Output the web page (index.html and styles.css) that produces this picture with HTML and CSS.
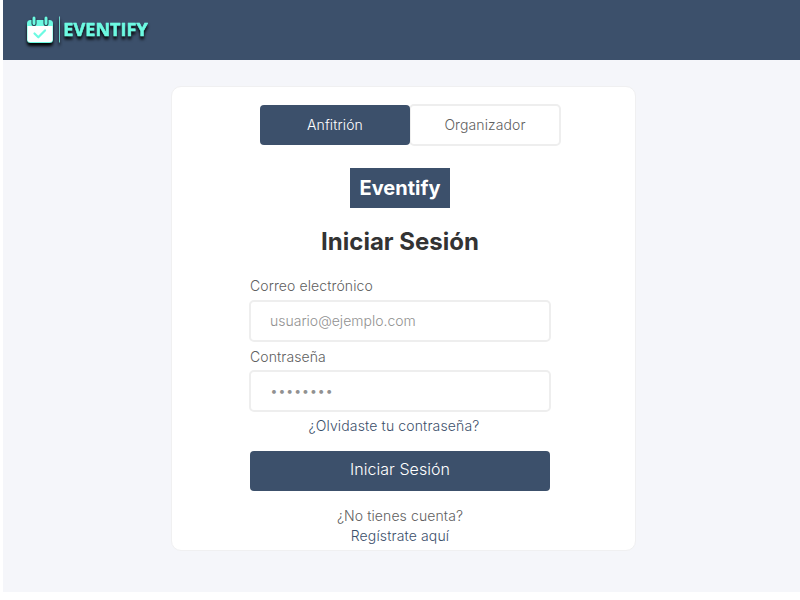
FILE: index.html
```html
<!DOCTYPE html>
<html lang="es">
<head>
<meta charset="utf-8">
<title>Eventify - Iniciar Sesión</title>
<link rel="stylesheet" href="styles.css">
</head>
<body>
<div class="page">
  <header class="topbar">
    <svg class="logo" width="134" height="44" viewBox="0 0 134 44" role="img" aria-label="Eventify">
      <rect x="7" y="12" width="26" height="23" rx="3.5" fill="#6dfae2"/>
      <path d="M7.500 18h25v13.500a2.500 2.500 0 0 1-2.500 2.500h-20a2.500 2.500 0 0 1-2.500-2.500z" fill="#fff"/>
      <g stroke-linecap="round">
        <path d="M14 11.500v4M26 11.500v4" stroke="#26394d" stroke-width="5"/>
        <path d="M14 10v5.500M26 10v5.500" stroke="#6dfae2" stroke-width="3"/>
      </g>
      <path d="M14.500 25.500l3.800 3.800 6.700-6.900" fill="none" stroke="#6dfae2" stroke-width="2.200" stroke-linecap="round" stroke-linejoin="round"/>
      <rect x="39" y="8.500" width="1" height="26" fill="#6dd6cc"/>
      <text class="logo-name" x="43.300" y="28.300" textLength="84.500">EVENTIFY</text>
    </svg>
  </header>
  <main class="card">
    <div class="tabs">
      <button class="tab tab-active">Anfitrión</button>
      <button class="tab">Organizador</button>
    </div>
    <div class="brand">Eventify</div>
    <h1 class="title">Iniciar Sesión</h1>
    <form class="form">
      <label class="label" for="email">Correo electrónico</label>
      <input class="input" id="email" type="text" placeholder="usuario@ejemplo.com">
      <label class="label label-password" for="password">Contraseña</label>
      <input class="input" id="password" type="password" placeholder="••••••••">
      <a class="link forgot">¿Olvidaste tu contraseña?</a>
      <button class="submit" type="button">Iniciar Sesión</button>
      <span class="signup">¿No tienes cuenta?</span>
      <a class="link">Regístrate aquí</a>
    </form>
  </main>
</div>
</body>
</html>
```
FILE: styles.css
```css
* { box-sizing: border-box; }
body {
  margin: 0;
  background: #fff;
  font-family: Inter, sans-serif;
  font-size: 14px;
  font-weight: 350;
  letter-spacing: .1px;
  color: #606060;
}
button, input { font: inherit; letter-spacing: inherit; margin: 0; }
.page {
  margin-left: 3px;
  height: 592px;
  background: #f5f6fa;
}
.topbar {
  display: flex;
  height: 60px;
  padding: 8px 0 0 17px;
  background: #3c506b;
}
.logo { filter: drop-shadow(.5px 3px 1.5px rgba(0, 0, 0, .95)); }
.logo-name {
  font-family: "Open Sans", sans-serif;
  font-size: 18px;
  font-weight: 700;
  letter-spacing: 0;
  fill: #6dfae2;
  stroke: #6dfae2;
  stroke-width: .6px;
  stroke-linejoin: round;
}
.card {
  display: flex;
  flex-direction: column;
  align-items: center;
  width: 465px;
  height: 465px;
  margin: 26px 0 0 168px;
  padding: 17px 7px 0 0;
  background: #fff;
  border: 1px solid #f0f0f1;
  border-radius: 10px;
}
.tabs {
  display: flex;
  width: 302px;
  height: 42px;
  margin-left: 20px;
}
.tab {
  width: 152px;
  height: 42px;
  margin-left: -1px;
  padding: 0 0 1px;
  background: #fff;
  color: #606060;
  border: 2px solid #eee;
  border-radius: 5px;
}
.tab-active {
  position: relative;
  width: 150px;
  height: 40px;
  margin: 1px 0 1px 1px;
  background: #3c506b;
  color: #fff;
  border: 0;
  border-radius: 4px;
}
.brand {
  width: 100px;
  height: 40px;
  margin-top: 22px;
  background: #3c506b;
  color: #fff;
  font-size: 20px;
  font-weight: 700;
  letter-spacing: 0;
  line-height: 40px;
  text-align: center;
}
.title {
  margin: 19px 0 0;
  color: #333;
  font-size: 24px;
  font-weight: 700;
  letter-spacing: 0;
  line-height: 30px;
}
.form {
  display: flex;
  flex-direction: column;
  align-items: center;
  width: 302px;
  margin-top: 19px;
  line-height: 20px;
}
.label {
  align-self: flex-start;
  margin-left: 1px;
}
.label-password { margin-top: 5px; }
.input {
  width: 302px;
  height: 42px;
  margin-top: 4px;
  padding: 0 19px 1px;
  background: #fff;
  border: 2px solid #eee;
  border-radius: 5px;
  letter-spacing: 0;
}
.label-password + .input { margin-top: 3px; }
.input::placeholder { color: #919191; opacity: 1; }
.link {
  color: #3c506b;
  letter-spacing: .14px;
}
.forgot {
  margin: 4px 12px 0 0;
}
.submit {
  width: 300px;
  height: 40px;
  margin: 15px 0;
  padding: 0 0 4px;
  background: #3c506b;
  color: #fff;
  border: 0;
  border-radius: 4px;
  font-size: 16px;
  letter-spacing: .05px;
}
```
